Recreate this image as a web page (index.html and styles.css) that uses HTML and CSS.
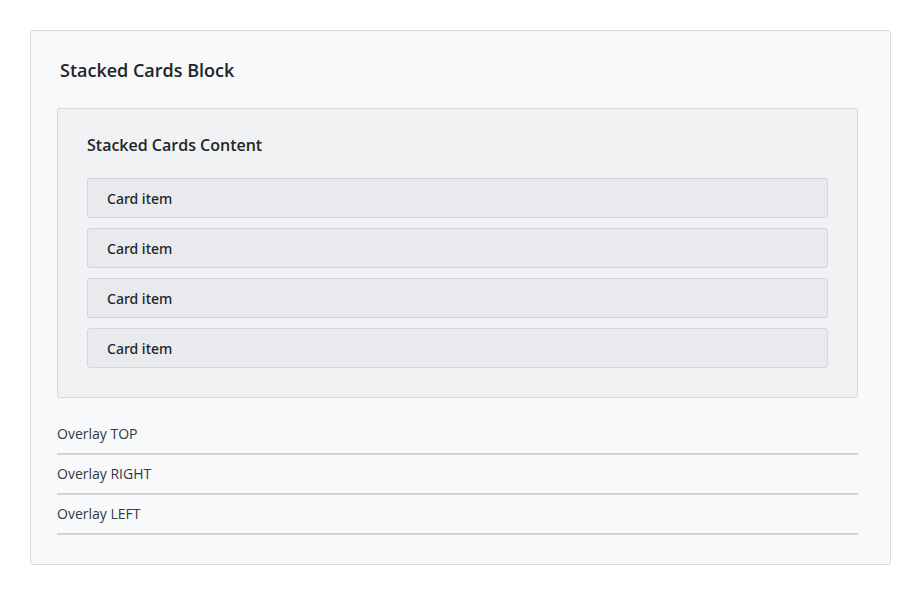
FILE: index.html
```html
<!DOCTYPE html>
<html>
<head>
<meta charset="utf-8">
<link rel="stylesheet" href="styles.css">
</head>
<body>
<div class="page">
  <section class="block">
    <h2 class="block-title">Stacked Cards Block</h2>
    <div class="content">
      <h3 class="content-title">Stacked Cards Content</h3>
      <div class="cards">
        <div class="card">Card item</div>
        <div class="card">Card item</div>
        <div class="card">Card item</div>
        <div class="card">Card item</div>
      </div>
    </div>
    <ul class="overlays">
      <li class="overlay">Overlay TOP</li>
      <li class="overlay">Overlay RIGHT</li>
      <li class="overlay">Overlay LEFT</li>
    </ul>
  </section>
</div>
</body>
</html>
```
FILE: styles.css
```css
* { box-sizing: border-box; }
html, body { margin: 0; padding: 0; background: #ffffff; }
body { font-family: "Open Sans", "Noto Sans", sans-serif; color: #212529; }
.page { padding: 30px 30px 0 30px; }
.block {
  background: #f8f9fa;
  border: 1px solid #d9dcdf;
  border-radius: 3px;
  padding: 26px 32px 29px 26px;
}
.block-title {
  margin: 0 0 24px 3px;
  font-size: 18px;
  line-height: 27px;
  font-weight: 600;
  color: #212529;
}
.content {
  background: #f1f2f4;
  border: 1px solid #d6d8db;
  border-radius: 3px;
  padding: 24px 29px 29px 29px;
}
.content-title {
  margin: 0 0 21px 0;
  font-size: 16px;
  line-height: 24px;
  font-weight: 600;
  color: #212529;
}
.cards { display: flex; flex-direction: column; gap: 10px; }
.card {
  height: 40px;
  background: #e9eaed;
  border: 1px solid #d3d5d9;
  border-radius: 3px;
  padding: 0 19px;
  display: flex;
  align-items: center;
  font-family: "Noto Sans", "Open Sans", sans-serif;
  font-size: 14px;
  font-weight: 500;
  color: #212529;
}
.overlays { list-style: none; margin: 17px 0 0 0; padding: 0; }
.overlay {
  padding: 9px 0;
  line-height: 20px;
  font-size: 14px;
  color: #333a40;
  border-bottom: 2px solid #d2d5d8;
}
```
